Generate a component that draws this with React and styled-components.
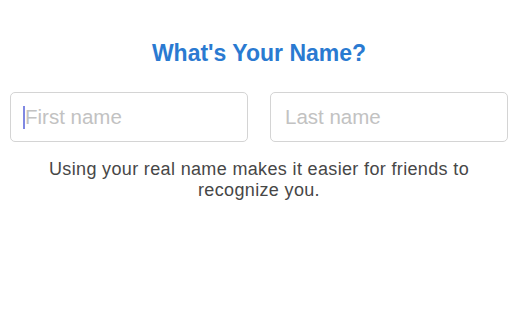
import styled, { createGlobalStyle } from "styled-components";

const GlobalStyle = createGlobalStyle`
  html, body {
    margin: 0;
    padding: 0;
    background: #ffffff;
  }
  body {
    font-family: "Liberation Sans", Arial, sans-serif;
  }
`;

const Page = styled.div`
  width: 518px;
  height: 314px;
  box-sizing: border-box;
  padding: 40px 10px 0;
  display: flex;
  flex-direction: column;
  align-items: center;
`;

const Title = styled.h1`
  margin: 0;
  font-size: 23px;
  line-height: 27px;
  font-weight: 700;
  color: #2a7ad1;
`;

const Fields = styled.div`
  margin-top: 25px;
  width: 100%;
  display: grid;
  grid-template-columns: 1fr 1fr;
  gap: 22px;
`;

const Field = styled.div`
  position: relative;
`;

const Input = styled.input`
  width: 100%;
  height: 50px;
  box-sizing: border-box;
  border: 1px solid #d4d4d4;
  border-radius: 5px;
  padding: 0 14px;
  font-family: "Liberation Sans", Arial, sans-serif;
  font-size: 20.5px;
  color: #333;
  outline: none;
  background: #fff;

  &::placeholder {
    color: #c2c2c2;
  }
`;

const Caret = styled.span`
  position: absolute;
  left: 13px;
  top: 14px;
  width: 2px;
  height: 23px;
  background: #8088e2;
`;

const Caption = styled.p`
  margin: 17px 0 0;
  max-width: 460px;
  text-align: center;
  font-size: 18px;
  line-height: 21px;
  letter-spacing: 0.35px;
  color: #474747;
`;

export default function App() {
  return (
    <>
      <GlobalStyle />
      <Page>
        <Title>What's Your Name?</Title>
        <Fields>
          <Field>
            <Input placeholder="First name" />
            <Caret />
          </Field>
          <Field>
            <Input placeholder="Last name" />
          </Field>
        </Fields>
        <Caption>
          Using your real name makes it easier for friends to recognize you.
        </Caption>
      </Page>
    </>
  );
}
